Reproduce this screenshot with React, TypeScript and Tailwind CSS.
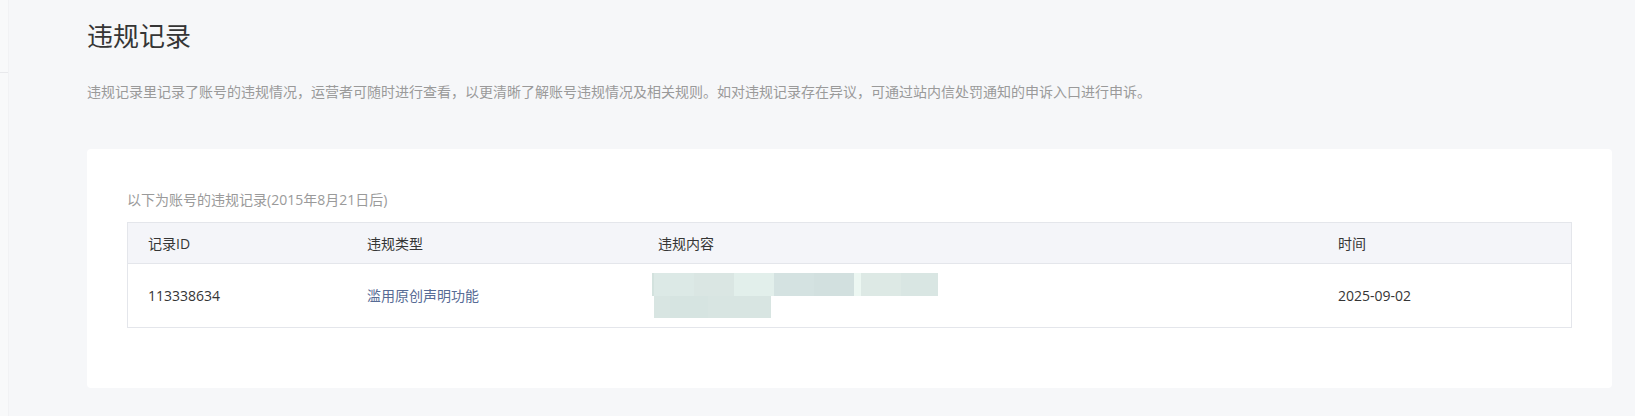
const font = "font-['Open_Sans','Noto_Sans_CJK_SC',sans-serif]";

const lineOne = [
  { w: 2, c: "bg-[#d3e2de]" },
  { w: 40, c: "bg-[#dce9e6]" },
  { w: 40, c: "bg-[#dae6e3]" },
  { w: 40, c: "bg-[#e2efeb]" },
  { w: 40, c: "bg-[#d4e2e1]" },
  { w: 40, c: "bg-[#d2e0df]" },
  { w: 7, c: "bg-[#ecf7f2]" },
  { w: 40, c: "bg-[#dde9e5]" },
  { w: 37, c: "bg-[#d9e6e3]" },
];

const lineTwo = [
  { w: 16, c: "bg-[#d8e5e2]" },
  { w: 38, c: "bg-[#d6e4e1]" },
  { w: 63, c: "bg-[#d8e5e2]" },
];

function BlurredContent() {
  // mosaic standing in for the masked article title
  return (
    <div className="-ml-[6px] flex flex-col">
      <div className="flex h-[23px]">
        {lineOne.map((b, i) => (
          <div key={i} className={b.c} style={{ width: b.w }} />
        ))}
      </div>
      <div className="ml-[2px] flex h-[22px]">
        {lineTwo.map((b, i) => (
          <div key={i} className={b.c} style={{ width: b.w }} />
        ))}
      </div>
    </div>
  );
}

export default function App() {
  return (
    <div className={`${font} flex min-h-[416px] w-full bg-[#f6f7f9] text-[14px]`}>
      {/* edge of the side menu */}
      <div className="w-[9px] shrink-0 border-r border-[#f1f2f4] bg-[#f8f9fa] pt-[72px]">
        <div className="h-px bg-[#e8e9ec]" />
      </div>

      <div className="flex-1 pl-[78px] pr-[23px]">
        <h2 className="pt-[18px] text-[26px] font-normal leading-[36px] text-[#353535]">违规记录</h2>
        <p className="mt-[28px] leading-[20px] text-[#9a9a9a]">
          违规记录里记录了账号的违规情况，运营者可随时进行查看，以更清晰了解账号违规情况及相关规则。如对违规记录存在异议，可通过站内信处罚通知的申诉入口进行申诉。
        </p>

        <div className="mt-[47px] rounded bg-white px-[40px] pb-[60px] pt-[41px]">
          <p className="mb-[12px] leading-[20px] text-[#9a9a9a]">以下为账号的违规记录(2015年8月21日后)</p>

          <div className="border border-[#e4e6eb]">
            <div className="grid h-[41px] grid-cols-[219px_291px_680px_1fr] items-center border-b border-[#e4e6eb] bg-[#f4f5f9] text-[#353535]">
              <div className="pl-[20px]">记录ID</div>
              <div className="pl-[20px]">违规类型</div>
              <div className="pl-[20px]">违规内容</div>
              <div className="pl-[20px]">时间</div>
            </div>
            <div className="grid h-[63px] grid-cols-[219px_291px_680px_1fr] items-center text-[#353535]">
              <div className="pl-[20px]">113338634</div>
              <div className="pl-[20px] text-[#576b95]">滥用原创声明功能</div>
              <div className="pl-[20px]">
                <BlurredContent />
              </div>
              <div className="pl-[20px]">2025-09-02</div>
            </div>
          </div>
        </div>
      </div>
    </div>
  );
}
